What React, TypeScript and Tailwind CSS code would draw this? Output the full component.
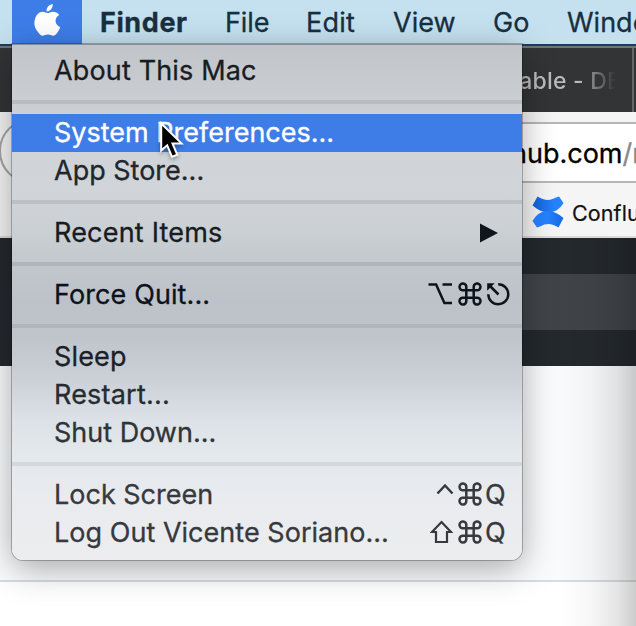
import React from "react";

function Command() {
  return (
    <svg className="h-[24px] w-[24px]" viewBox="0 0 24 24" fill="none" stroke="currentColor" strokeWidth="2.5">
      <path d="M8.300 8.300V5.200a3.400 3.400 0 1 0-3.400 3.100h14.200A3.400 3.400 0 1 0 15.700 5.200v13.600a3.400 3.400 0 1 0 3.400-3.100H4.900A3.400 3.400 0 1 0 8.300 18.800z" />
    </svg>
  );
}

function Row({
  label,
  tracking,
  tone = "text-[#171c22]",
  active = false,
  children,
}: {
  label: string;
  tracking: string;
  tone?: string;
  active?: boolean;
  children?: React.ReactNode;
}) {
  return (
    <div
      className={
        "flex h-[38px] shrink-0 items-center justify-between pb-[2px] pl-[42px] [-webkit-text-stroke:0.3px] " +
        (active ? "bg-[#3e7de8] text-white" : tone)
      }
    >
      <span className={tracking}>{label}</span>
      {children}
    </div>
  );
}

function Separator({ tone = "bg-[#b8bcc0]" }: { tone?: string }) {
  return (
    <div className="flex h-6 shrink-0 items-center">
      <div className={"h-1 w-full " + tone} />
    </div>
  );
}

function AppleMenu() {
  return (
    <div className="absolute left-[12px] top-[44px] flex h-[516px] w-[510px] flex-col rounded-b-[11px] border-t border-[#858e99] bg-[linear-gradient(180deg,#c1c5c9_0%,#c8cbcf_8%,#cfd2d7_17%,#d1d5d9_28%,#cbd0d4_36%,#c2c7cd_43%,#bdc2ca_50%,#c0c5cc_57%,#ccd1d8_65%,#dce2e7_73%,#e4e9ed_80%,#e9ebee_88%,#ededef_100%)] pt-[7px] shadow-[0_0_0_1px_rgba(0,0,0,0.25),0_8px_34px_rgba(0,0,0,0.34)]">
      <Row label="About This Mac" tracking="tracking-[0.15px]" />
      <Separator />
      <Row label="System Preferences..." tracking="tracking-[0px]" active />
      <Row label="App Store..." tracking="tracking-[0px]" tone="text-[#20262c]" />
      <Separator tone="bg-[#bbc0c4]" />
      <Row label="Recent Items" tracking="tracking-[0.2px]">
        <svg className="mr-[24px] mt-[2px] h-[20px] w-[18px]" viewBox="0 0 18 20" fill="#10161c">
          <path d="M0 .5 18 10 0 19.500z" />
        </svg>
      </Row>
      <Separator tone="bg-[#b0b5bc]" />
      <Row label="Force Quit..." tracking="tracking-[0.1px]" tone="text-[#0d131b]">
        <div className="mr-[12px] flex items-center">
          <svg className="mr-[5px] h-[24px] w-[25px]" viewBox="0 0 25 24" fill="none" stroke="currentColor" strokeWidth="2.500">
            <path d="M.5 2.500h7.600l8.300 18.400h7.600M14.500 2.500h9.500" />
          </svg>
          <Command />
          <svg className="ml-[4px] h-[24px] w-[24px]" viewBox="0 0 24 24" fill="none" stroke="currentColor" strokeWidth="2.500">
            <path d="M12.200 2.200A10 10 0 1 1 2.300 12.200M12.500 12.500 4.500 4.500" />
            <path d="M1.200 1.300h7.500l-7.500 7.500z" fill="currentColor" stroke="none" />
          </svg>
        </div>
      </Row>
      <Separator tone="bg-[#b0b5bc]" />
      <Row label="Sleep" tracking="tracking-[0.15px]" tone="text-[#1a2026]" />
      <Row label="Restart..." tracking="tracking-[0.2px]" tone="text-[#252b30]" />
      <Row label="Shut Down..." tracking="tracking-[0px]" tone="text-[#303438]" />
      <Separator tone="bg-[#d4d8dc]" />
      <Row label="Lock Screen" tracking="tracking-[0px]" tone="text-[#36393d]">
        <div className="mr-[16px] flex items-center">
          <svg className="mr-[4px] h-[24px] w-[18px]" viewBox="0 0 18 24" fill="none" stroke="currentColor" strokeWidth="2.500">
            <path d="m1.500 11.500 7.500-8 7.500 8" />
          </svg>
          <Command />
          <span className="ml-[3px] w-[21px]">Q</span>
        </div>
      </Row>
      <Row label="Log Out Vicente Soriano..." tracking="tracking-[0.03px]" tone="text-[#36393d]">
        <div className="mr-[16px] flex items-center">
          <svg className="mr-[5px] h-[24px] w-[23px]" viewBox="0 0 23 24" fill="none" stroke="currentColor" strokeWidth="2.200">
            <path d="M11.500 2 21 12h-4v10H6V12H2z" />
          </svg>
          <Command />
          <span className="ml-[3px] w-[21px]">Q</span>
        </div>
      </Row>
    </div>
  );
}

function MenuBar() {
  return (
    <div className="flex h-[44px] shrink-0 items-center overflow-hidden whitespace-nowrap bg-[#c5e1f0] pl-[12px] text-[#17303f] [-webkit-text-stroke:0.3px]">
      <div className="flex h-full w-[70px] shrink-0 items-center justify-center bg-[#3e7de8]">
        <svg className="mb-[4px] h-[32px] w-[27px]" viewBox="0 0 27 32" fill="#fff">
          <path d="M18.700 0c.3 2.200-.6 4.100-1.800 5.400-1.200 1.300-2.900 2-4.400 1.900-.2-2 .7-3.900 1.900-5.100C15.700 1 17.300.1 18.700 0z" />
          <path d="M13.600 9.100c1.100 0 3-1.400 5.300-1.400 2.500 0 4.900 1.200 6.300 3.200-5.400 3.100-4.600 10 1.100 12.300-.8 2-1.900 4-3.200 5.900-1.200 1.700-2.500 2.600-3.900 2.600-1.900 0-2.700-1.100-5.300-1.100-2.500 0-3.400 1.100-5.200 1.100-1.500 0-2.900-1.100-4.200-3C.3 24.600-.5 19.200 1.100 14.700c1.200-3.900 4-6.800 7.500-6.900 2.100 0 3.900 1.300 5 1.300z" />
        </svg>
      </div>
      <span className="ml-[18px] w-[125px] shrink-0 font-bold tracking-[0.6px]">Finder</span>
      <span className="w-[81px] shrink-0 tracking-[-0.1px]">File</span>
      <span className="w-[87px] shrink-0 tracking-[0.2px]">Edit</span>
      <span className="w-[100px] shrink-0 tracking-[0px]">View</span>
      <span className="w-[74px] shrink-0 tracking-[0.2px]">Go</span>
      <span className="shrink-0 tracking-[0px]">Window</span>
    </div>
  );
}

function Browser() {
  return (
    <div className="flex flex-1 flex-col overflow-hidden whitespace-nowrap bg-white">
      <div className="flex h-[68px] shrink-0 flex-col bg-[#333436]">
        <div className="h-[2px] bg-[#213c5a]" />
        <div className="h-[2px] bg-[#727476]" />
        <div className="flex flex-1 justify-end">
          <div className="mr-[11px] flex items-center text-[23px] font-medium leading-none tracking-[0.200px]">
            <span className="bg-[linear-gradient(90deg,#bcbcbc_0%,#bcbcbc_60%,#333436_95%)] bg-clip-text pt-[4px] pb-[2px] text-transparent">
              lable - DE
            </span>
          </div>
          <div className="w-[2px] bg-[#656668]" />
          <div className="w-[2px]" />
        </div>
      </div>
      <div className="flex h-[126px] shrink-0 flex-col border-b-2 border-[#dadada] bg-[#f5f5f5]">
        <div className="flex h-[70px] items-start pt-[9px]">
          <div className="-ml-px -mt-[3px] h-[66px] w-[66px] shrink-0 rounded-full border-2 border-[#a5a5a5] bg-[#f7f7f7]" />
          <div className="mt-px flex h-[61px] flex-1 items-center border-y-2 border-[#b7b7b7] bg-white pl-[446px] pt-[2px] text-[27px] text-black [-webkit-text-stroke:0.3px]">
            <span>hub.com</span>
            <span className="text-[#898989]">/m</span>
          </div>
        </div>
        <div className="flex h-[54px] items-center pl-[531px] pt-[5px]">
          <svg className="mr-[7px] h-[34px] w-[34px] shrink-0" viewBox="0 0 34 34">
            <defs>
              <linearGradient id="confluenceTop" x1="0" x2="1">
                <stop offset="0" stopColor="#1261d6" />
                <stop offset="0.700" stopColor="#2682ff" />
              </linearGradient>
              <linearGradient id="confluenceBottom" x1="1" x2="0">
                <stop offset="0" stopColor="#1668e0" />
                <stop offset="0.500" stopColor="#2682ff" />
              </linearGradient>
            </defs>
            <path d="M6.500 1.500C13 5 18 6.500 25 2.500L28 1.500 32.500 8C28 15 23 17.500 17 17.500 12 17.500 7 15 1.500 10.500z" fill="url(#confluenceTop)" />
            <path d="M27.500 32.500C21 28.500 16 27.500 9 31.500L6 32.500 1.500 26C6 18.500 11 16 17 16 22 16 27 18.500 32.500 23z" fill="url(#confluenceBottom)" />
          </svg>
          <span className="pt-[4px] text-[21.500px] tracking-[0.100px] text-[#111] [-webkit-text-stroke:0.2px]">Confluence</span>
        </div>
      </div>
      <div className="flex h-[128px] shrink-0 items-center bg-[#24292e]">
        <div className="ml-[200px] h-[56px] flex-1 bg-[#404448]" />
      </div>
      <div className="h-[216px] shrink-0 border-b-2 border-[#d8dbdf] bg-[#fafbfc]" />
    </div>
  );
}

export default function App() {
  return (
    <div className="relative flex h-[626px] w-[636px] flex-col overflow-hidden font-[Inter,'Liberation_Sans',sans-serif] text-[27px] leading-none">
      <MenuBar />
      <Browser />
      <div className="absolute right-0 top-[238px] h-[388px] w-[76px] bg-[linear-gradient(90deg,transparent_0%,rgba(0,0,0,0.03)_40%,rgba(0,0,0,0.1)_75%,rgba(0,0,0,0.2)_100%)]" />
      <AppleMenu />
      <svg
        className="absolute left-[157px] top-[119px] h-[42px] w-[28px] drop-shadow-[0_2px_2px_rgba(0,0,0,0.35)]"
        viewBox="0 0 28 42"
      >
        <path
          d="M4.200 4.500v27l6-5.200 4.800 11.500 5.200-2.200-4.700-11.200h9z"
          fill="#000"
          stroke="#fff"
          strokeWidth="2"
        />
      </svg>
    </div>
  );
}
